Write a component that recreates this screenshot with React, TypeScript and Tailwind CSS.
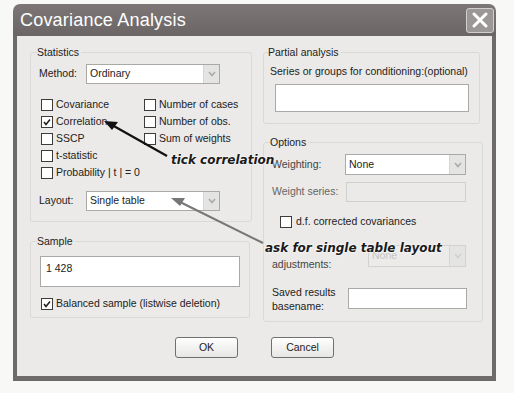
const font = "font-['Liberation_Sans',Tahoma,sans-serif]"

const Check = ({ checked }: { checked?: boolean }) => (
    <span className="w-[12px] h-[12px] border border-[#3c3c3c] bg-white flex items-center justify-center shrink-0">
        {checked && (
            <svg width="10" height="10" viewBox="0 0 10 10">
                <path d="M2 5 L4 7.5 L8 2.5" fill="none" stroke="#222" strokeWidth="1.6" />
            </svg>
        )}
    </span>
)

const CheckRow = ({ label, checked, className = "" }: { label: string, checked?: boolean, className?: string }) => (
    <div className={`h-[17px] flex items-center gap-[3px] ${className}`}>
        <Check checked={checked} />
        <span>{label}</span>
    </div>
)

const Select = ({ value, className = "", disabled }: { value: string, className?: string, disabled?: boolean }) => (
    <div className={`flex items-center border ${disabled ? "border-[#d2d2d0] bg-[#ecebe9] text-[#c4c4c2]" : "border-[#a9a9a7] bg-white"} ${className}`}>
        <span className="flex-1 pl-[3px]">{value}</span>
        <span className="w-[16px] h-full flex items-center justify-center bg-[#e4e4e2] border-l border-[#d6d6d4]">
            <svg width="8" height="6" viewBox="0 0 8 6">
                <path d="M1 1 L4 4.5 L7 1" fill="none" stroke={disabled ? "#d0d0ce" : "#a8a8a8"} strokeWidth="1.5" />
            </svg>
        </span>
    </div>
)

const Group = ({ title, className = "", children }: { title: string, className?: string, children: React.ReactNode }) => (
    <fieldset className={`border border-[#d9d9d6] rounded-[3px] pl-[8px] ${className}`}>
        <legend className="text-[10.5px] leading-[13px] -ml-[2px] pr-[2px]">{title}</legend>
        {children}
    </fieldset>
)

const Button = ({ label }: { label: string }) => (
    <div className="w-[63px] h-[21px] border border-[#707070] rounded-[3px] bg-gradient-to-b from-white to-[#e6e6e4] flex items-center justify-center">
        {label}
    </div>
)

export default function App() {
    return (
        <div className={`w-[514px] h-[393px] bg-[#f8f8f6] relative overflow-hidden text-[10.5px] text-[#222] ${font}`}>
            <div className="ml-[13px] pt-[4px] w-[483px] flex flex-col">
                <div className="h-[32px] rounded-t-[7px] bg-gradient-to-b from-[#7c7776] to-[#6b6665] flex items-center justify-between pl-[7px] pr-[2px]">
                    <span className="text-white text-[18px] tracking-[0.2px]">Covariance Analysis</span>
                    <span className="w-[28px] h-[25px] rounded-[3px] border border-[#cfcfcf] bg-[#9b9796] flex items-center justify-center">
                        <svg width="16" height="16" viewBox="0 0 16 16">
                            <path d="M2 2 L14 14 M14 2 L2 14" stroke="white" strokeWidth="3" strokeLinecap="round" />
                        </svg>
                    </span>
                </div>

                <div className="h-[345px] bg-[#ebeae8] border-x-[4px] border-b-[5px] border-[#6e6a69] pl-[13px] pr-[9px] pt-[10px] flex flex-col">
                    <div className="flex items-start gap-[11px]">
                        <div className="w-[222px] flex flex-col">
                            <Group title="Statistics" className="h-[176px]">
                                <div className="h-[20px] mt-[5px] flex items-center">
                                    <span className="w-[47px]">Method:</span>
                                    <Select value="Ordinary" className="w-[134px] h-[20px]" />
                                </div>
                                <div className="mt-[12px] ml-[2px] grid grid-cols-[103px_1fr]">
                                    <CheckRow label="Covariance" />
                                    <CheckRow label="Number of cases" />
                                    <CheckRow label="Correlation" checked />
                                    <CheckRow label="Number of obs." />
                                    <CheckRow label="SSCP" />
                                    <CheckRow label="Sum of weights" />
                                    <CheckRow label="t-statistic" />
                                    <span />
                                    <CheckRow label="Probability | t | = 0" />
                                </div>
                                <div className="h-[20px] mt-[10px] flex items-center">
                                    <span className="w-[47px]">Layout:</span>
                                    <Select value="Single table" className="w-[134px] h-[20px]" />
                                </div>
                            </Group>

                            <Group title="Sample" className="mt-[13px] h-[83px] w-[220px]">
                                <div className="mt-[8px] ml-[1px] w-[200px] h-[31px] bg-white border border-[#a9a9a7] pl-[5px] pt-[4px]">1 428</div>
                                <CheckRow label="Balanced sample (listwise deletion)" checked className="mt-[8px] ml-[2px]" />
                            </Group>
                        </div>

                        <div className="w-[220px] flex flex-col">
                            <Group title="Partial analysis" className="h-[78px] w-[217px] !pl-[6px]">
                                <div className="mt-[6px] leading-[13px]">Series or groups for conditioning:(optional)</div>
                                <div className="mt-[6px] ml-[5px] w-[194px] h-[28px] bg-white border border-[#a9a9a7]" />
                            </Group>

                            <Group title="Options" className="mt-[12px] h-[186px]">
                                <div className="mt-[5px] h-[21px] flex items-center">
                                    <span className="w-[73px] text-[#444]">Weighting:</span>
                                    <Select value="None" className="w-[121px] h-[21px]" />
                                </div>
                                <div className="mt-[7px] h-[20px] flex items-center">
                                    <span className="w-[74px] text-[#666]">Weight series:</span>
                                    <div className="w-[120px] h-[20px] border border-[#cfcfcd] bg-[#ebeae8]" />
                                </div>
                                <CheckRow label="d.f. corrected covariances" className="mt-[11px] ml-[8px] gap-[4px]" />
                                <div className="mt-[15px] h-[22px] flex items-center">
                                    <span className="w-[96px] self-end leading-[13px] -mb-[4px] text-[#444]">adjustments:</span>
                                    <Select value="None" className="w-[98px] h-[22px]" disabled />
                                </div>
                                <div className="mt-[21px] h-[21px] flex items-center">
                                    <span className="w-[76px] leading-[14px]">Saved results<br />basename:</span>
                                    <div className="w-[119px] h-[21px] bg-white border border-[#a9a9a7]" />
                                </div>
                            </Group>
                        </div>
                    </div>

                    <div className="mt-[15px] flex justify-center gap-[33px] pr-[4px]">
                        <Button label="OK" />
                        <Button label="Cancel" />
                    </div>
                </div>
            </div>

            {/* annotations drawn over the dialog */}
            <svg className="absolute left-0 top-0 pointer-events-none" width="514" height="393">
                <line x1="167" y1="156" x2="112" y2="125" stroke="#111" strokeWidth="2.2" />
                <path d="M104 121 L118 122 L112 130 Z" fill="#111" />
                <line x1="263" y1="243" x2="180" y2="202" stroke="#777" strokeWidth="2" />
                <path d="M171 198 L185 198 L180 206 Z" fill="#777" />
            </svg>
            <span className="absolute left-[171px] top-[151px] font-['DejaVu_Sans',Verdana,sans-serif] text-[12px] font-bold italic text-[#1a1a1a] [text-shadow:0_0_2px_#fff,0_0_2px_#fff]">tick correlation</span>
            <span className="absolute left-[265px] top-[239px] font-['DejaVu_Sans',Verdana,sans-serif] text-[12px] font-bold italic text-[#1a1a1a] [text-shadow:0_0_2px_#fff,0_0_3px_#fff]">ask for single table layout</span>
        </div>
    )
}
